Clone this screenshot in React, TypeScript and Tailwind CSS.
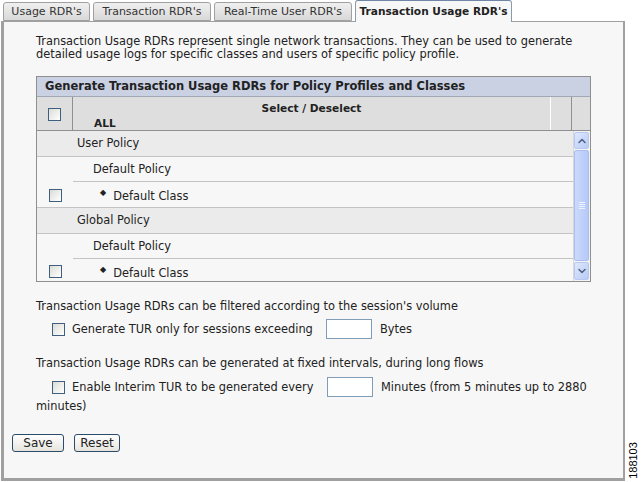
import { ChevronUp, ChevronDown } from 'lucide-react'

function Check({ className = '' }: { className?: string }) {
  return (
    <span
      className={`inline-block w-[13px] h-[13px] border border-[#3f5f80] bg-gradient-to-br from-[#dcdcd6] to-white ${className}`}
    />
  )
}

function TextBox() {
  return <span className="inline-block w-[46px] h-[20px] border border-[#7f9db9] bg-white" />
}

function Tab({ label, width, active = false }: { label: string; width: string; active?: boolean }) {
  if (active) {
    return (
      <div className={`${width} h-[22px] -mb-px flex items-center justify-center whitespace-nowrap border border-b-0 border-[#8a9ab0] border-t-[#6f86a8] rounded-t-[3px] bg-[#f7f7f7] font-bold text-[10.6px] text-[#222] relative z-10`}>
        {label}
      </div>
    )
  }
  return (
    <div className={`${width} h-[19px] mt-[2px] flex items-center justify-center whitespace-nowrap border border-[#a0a0a0] rounded-t-[3px] bg-gradient-to-b from-[#f0f0f0] to-[#d8d8d8] text-[11px] text-[#333]`}>
      {label}
    </div>
  )
}

function Scrollbar() {
  return (
    <div className="w-[17px] flex flex-col bg-[#f4f4f0] border-l border-[#d8d8d8] py-px pr-px">
      <div className="h-[17px] rounded-[2px] border border-[#b8c8f0] bg-gradient-to-br from-[#dfe8fd] to-[#b8cbf6] flex items-center justify-center">
        <ChevronUp className="w-3 h-3 text-[#4d6185]" strokeWidth={3} />
      </div>
      <div className="flex-1 my-px rounded-[2px] border border-[#a9bdee] bg-gradient-to-r from-[#cbd9fc] to-[#b6c9f7] flex items-center justify-center">
        <div className="flex flex-col gap-[1px]">
          <span className="block w-[6px] h-px bg-[#eef3ff]" />
          <span className="block w-[6px] h-px bg-[#eef3ff]" />
          <span className="block w-[6px] h-px bg-[#eef3ff]" />
          <span className="block w-[6px] h-px bg-[#eef3ff]" />
        </div>
      </div>
      <div className="h-[18px] rounded-[2px] border border-[#b8c8f0] bg-gradient-to-br from-[#dfe8fd] to-[#b8cbf6] flex items-center justify-center">
        <ChevronDown className="w-3 h-3 text-[#4d6185]" strokeWidth={3} />
      </div>
    </div>
  )
}

function PolicyGroup({ name, last = false }: { name: string; last?: boolean }) {
  return (
    <div>
      <div className="h-[26px] flex items-center pl-[40px] bg-[#ebebeb] border-b border-[#c4c4c4]">{name}</div>
      <div className={`flex ${last ? '' : 'border-b border-[#c4c4c4]'}`}>
        <div className="w-[36px] flex items-end justify-center pb-[5px]">
          <Check />
        </div>
        <div className="flex-1">
          <div className="h-[25px] flex items-center pl-[20px] border-b border-[#c4c4c4]">Default Policy</div>
          <div className={`${last ? 'h-[24px]' : 'h-[25px]'} flex items-center pt-[4px] pl-[27px]`}>
            <span className="text-[8px] mr-[7px] -mt-[8px]">◆</span>
            Default Class
          </div>
        </div>
      </div>
    </div>
  )
}

export default function App() {
  return (
    <div className="w-[641px] h-[482px] bg-white text-[11.4px] leading-[13px] text-[#222] relative" style={{ fontFamily: '"DejaVu Sans", Verdana, sans-serif' }}>
      {/* Tabs */}
      <div className="flex items-end gap-[3px] pl-[3px] h-[21px]">
        <Tab label="Usage RDR's" width="w-[87px]" />
        <Tab label="Transaction RDR's" width="w-[118px]" />
        <Tab label="Real-Time User RDR's" width="w-[138px]" />
        <Tab label="Transaction Usage RDR's" width="w-[157px]" active />
      </div>

      {/* Panel */}
      <div className="ml-px w-[624px] h-[460px] border border-l-[3px] border-[#a0a0a0] border-b-[3px] border-r-[2px] bg-[#f7f7f7] pl-[32px] pr-[33px] pt-[13px]">
        <p>
          Transaction Usage RDRs represent single network transactions. They can be used to generate
          <br />
          detailed usage logs for specific classes and users of specific policy profile.
        </p>

        <div className="mt-[15px] w-[555px] border border-[#8f8f8f]">
          <div className="h-[20px] flex items-center pl-[8px] bg-[#c9d1e2] border-b border-[#a0a8b8] font-bold text-[11.5px]">
            Generate Transaction Usage RDRs for Policy Profiles and Classes
          </div>
          <div className="h-[34px] flex bg-[#dedede] border-b border-[#8f8f8f] font-bold text-[10.6px]">
            <div className="w-[36px] flex justify-center pt-[11px] border-r border-[#8f8f8f]">
              <Check />
            </div>
            <div className="w-[478px] relative border-r border-white">
              <div className="text-center pt-[5px]">Select / Deselect</div>
              <div className="pl-[21px] pt-[2px]">ALL</div>
            </div>
            <div className="w-[21px] border-r border-[#8f8f8f]" />
          </div>
          <div className="h-[150px] flex">
            <div className="flex-1 flex flex-col overflow-hidden">
              <PolicyGroup name="User Policy" />
              <PolicyGroup name="Global Policy" last />
            </div>
            <Scrollbar />
          </div>
        </div>

        <p className="mt-[18px]">Transaction Usage RDRs can be filtered according to the session's volume</p>
        <div className="mt-[6px] flex items-center h-[20px] pl-[16px]">
          <Check />
          <span className="ml-[7px] w-[254px]">Generate TUR only for sessions exceeding</span>
          <TextBox />
          <span className="ml-[8px]">Bytes</span>
        </div>

        <p className="mt-[18px]">Transaction Usage RDRs can be generated at fixed intervals, during long flows</p>
        <div className="mt-[7px] flex items-center h-[20px] pl-[16px]">
          <Check />
          <span className="ml-[7px] w-[255px]">Enable Interim TUR to be generated every</span>
          <TextBox />
          <span className="ml-[8px]">Minutes (from 5 minutes up to 2880</span>
        </div>
        <p className="mt-[3px]">minutes)</p>

        <div className="mt-[21px] -ml-[24px] flex gap-[10px]">
          <button className="w-[52px] h-[18px] border border-[#2c4a6a] rounded-[3px] bg-gradient-to-b from-white to-[#e6e4dc] text-[12px] leading-none">
            Save
          </button>
          <button className="w-[46px] h-[18px] border border-[#2c4a6a] rounded-[3px] bg-gradient-to-b from-white to-[#e6e4dc] text-[12px] leading-none">
            Reset
          </button>
        </div>
      </div>

      <div className="absolute left-[627px] top-[441px] w-[12px] h-[38px] flex items-center justify-center">
        <span className="-rotate-90 text-[11px] text-black whitespace-nowrap" style={{ fontFamily: '"Liberation Sans", Arial, sans-serif' }}>
          188103
        </span>
      </div>
    </div>
  )
}
